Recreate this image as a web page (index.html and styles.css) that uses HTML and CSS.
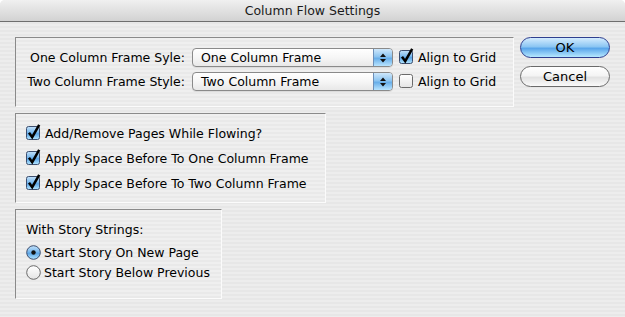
FILE: index.html
```html
<!DOCTYPE html>
<html>
<head>
<meta charset="utf-8">
<link rel="stylesheet" href="styles.css">
</head>
<body>
<svg class="defs" width="0" height="0" aria-hidden="true">
  <defs>
    <linearGradient id="blueFill" x1="0" y1="0" x2="0" y2="1">
      <stop offset="0" stop-color="#c4e2fa"/>
      <stop offset="0.45" stop-color="#7ab9ee"/>
      <stop offset="0.55" stop-color="#5aa4e6"/>
      <stop offset="1" stop-color="#b4e6ff"/>
    </linearGradient>
    <linearGradient id="whiteFill" x1="0" y1="0" x2="0" y2="1">
      <stop offset="0" stop-color="#ffffff"/>
      <stop offset="0.5" stop-color="#f2f2f2"/>
      <stop offset="1" stop-color="#e4e4e4"/>
    </linearGradient>
  </defs>
</svg>
<div class="window">
  <div class="titlebar">Column Flow Settings</div>
  <div class="content">
    <div class="top-row">
      <div class="group g1">
        <div class="frame-row">
          <span class="lbl">One Column Frame Syle:</span>
          <div class="popup"><span class="popup-text">One Column Frame</span><span class="arrows"><svg width="8" height="12" viewBox="0 0 8 12"><path d="M1 5 L4 1.5 L7 5 Z M1 7 L4 10.5 L7 7 Z" fill="#111"/></svg></span></div>
          <span class="check">
            <svg class="cb" width="16" height="17" viewBox="0 0 16 17"><rect x="0.5" y="2.5" width="13" height="13" rx="2" fill="url(#blueFill)" stroke="#3d4e6e"/><path d="M3 8.8 L6.2 13.2 L13.2 0.8" fill="none" stroke="#000" stroke-width="2.5"/></svg>
            Align to Grid
          </span>
        </div>
        <div class="frame-row">
          <span class="lbl">Two Column Frame Style:</span>
          <div class="popup"><span class="popup-text">Two Column Frame</span><span class="arrows"><svg width="8" height="12" viewBox="0 0 8 12"><path d="M1 5 L4 1.5 L7 5 Z M1 7 L4 10.5 L7 7 Z" fill="#111"/></svg></span></div>
          <span class="check">
            <svg class="cb" width="16" height="17" viewBox="0 0 16 17"><rect x="0.5" y="2.5" width="13" height="13" rx="2" fill="url(#whiteFill)" stroke="#6a6a6a"/></svg>
            Align to Grid
          </span>
        </div>
      </div>
      <div class="buttons">
        <div class="btn btn-default">OK</div>
        <div class="btn">Cancel</div>
      </div>
    </div>

    <div class="group g2">
      <div class="opt">
        <svg class="cb" width="16" height="17" viewBox="0 0 16 17"><rect x="0.5" y="2.5" width="13" height="13" rx="2" fill="url(#blueFill)" stroke="#3d4e6e"/><path d="M3 8.8 L6.2 13.2 L13.2 0.8" fill="none" stroke="#000" stroke-width="2.5"/></svg>
        Add/Remove Pages While Flowing?
      </div>
      <div class="opt">
        <svg class="cb" width="16" height="17" viewBox="0 0 16 17"><rect x="0.5" y="2.5" width="13" height="13" rx="2" fill="url(#blueFill)" stroke="#3d4e6e"/><path d="M3 8.8 L6.2 13.2 L13.2 0.8" fill="none" stroke="#000" stroke-width="2.5"/></svg>
        Apply Space Before To One Column Frame
      </div>
      <div class="opt">
        <svg class="cb" width="16" height="17" viewBox="0 0 16 17"><rect x="0.5" y="2.5" width="13" height="13" rx="2" fill="url(#blueFill)" stroke="#3d4e6e"/><path d="M3 8.8 L6.2 13.2 L13.2 0.8" fill="none" stroke="#000" stroke-width="2.5"/></svg>
        Apply Space Before To Two Column Frame
      </div>
    </div>

    <div class="group g3">
      <div class="g3-title">With Story Strings:</div>
      <div class="radio-opt">
        <svg class="rb" width="15" height="15" viewBox="0 0 15 15"><circle cx="7.5" cy="7.5" r="6.8" fill="url(#blueFill)" stroke="#3d4e6e"/><circle cx="7.5" cy="7.5" r="2.2" fill="#111"/></svg>
        Start Story On New Page
      </div>
      <div class="radio-opt">
        <svg class="rb" width="15" height="15" viewBox="0 0 15 15"><circle cx="7.5" cy="7.5" r="6.8" fill="url(#whiteFill)" stroke="#6a6a6a"/></svg>
        Start Story Below Previous
      </div>
    </div>
  </div>
</div>
</body>
</html>
```

FILE: styles.css
```css
html, body {
  margin: 0;
  padding: 0;
  background: #ffffff;
}

.defs {
  display: block;
  width: 0;
  height: 0;
}

.window {
  width: 625px;
  height: 317px;
  border-radius: 5px 5px 0 0;
  overflow: hidden;
  font-family: "DejaVu Sans", "Liberation Sans", sans-serif;
  font-size: 12.5px;
  color: #000;
  background: repeating-linear-gradient(to bottom, #ededed 0, #ededed 2px, #e7e7e7 2px, #e7e7e7 4px);
}

.titlebar {
  height: 21px;
  border-bottom: 1px solid #6e6e6e;
  background: linear-gradient(to bottom, #f0f0f0, #d2d2d2);
  text-align: center;
  line-height: 22px;
  font-size: 12.5px;
  color: #1a1a1a;
}

.content {
  padding: 15px 0 0 15px;
  display: flex;
  flex-direction: column;
  align-items: flex-start;
  gap: 6px;
}

.top-row {
  display: flex;
  gap: 6px;
  align-items: flex-start;
}

.group {
  box-sizing: border-box;
  border-top: 1px solid #8a8a8a;
  border-left: 1px solid #8a8a8a;
  border-right: 1px solid #fbfbfb;
  border-bottom: 1px solid #fbfbfb;
  background: repeating-linear-gradient(to bottom, #efefef 0, #efefef 2px, #e9e9e9 2px, #e9e9e9 4px);
}

.g1 {
  width: 499px;
  height: 70px;
  padding: 10px 0 0 9px;
  display: flex;
  flex-direction: column;
  gap: 5px;
}

.frame-row {
  display: flex;
  align-items: center;
  height: 19px;
}

.lbl {
  width: 160px;
  text-align: right;
  margin-right: 7px;
  white-space: nowrap;
}

.popup {
  box-sizing: border-box;
  width: 201px;
  height: 19px;
  border: 1px solid #8a8a8a;
  border-radius: 4px;
  background: linear-gradient(to bottom, #ffffff 0%, #f6f6f6 50%, #e8e8e8 100%);
  display: flex;
  align-items: center;
  overflow: hidden;
  box-shadow: 0 1px 0 rgba(0,0,0,0.08);
}

.popup-text {
  flex: 1;
  padding-left: 8px;
  line-height: 17px;
}

.arrows {
  width: 18px;
  height: 17px;
  display: flex;
  align-items: center;
  justify-content: center;
  border-left: 1px solid #6d8fb8;
  background: linear-gradient(to bottom, #cfe8fc 0%, #8cc4f0 45%, #68aee9 55%, #b8e4ff 100%);
}

.check {
  display: flex;
  align-items: center;
  margin-left: 6px;
  gap: 3px;
  white-space: nowrap;
}

.cb {
  display: block;
  margin-top: -3px;
}

.buttons {
  display: flex;
  flex-direction: column;
  gap: 8px;
}

.btn {
  box-sizing: border-box;
  width: 90px;
  height: 21px;
  border-radius: 11px;
  border: 1px solid #6b6b6b;
  background: linear-gradient(to bottom, #ffffff 0%, #f4f4f4 45%, #e2e2e2 55%, #fafafa 100%);
  text-align: center;
  line-height: 19px;
  font-size: 13px;
}

.btn-default {
  border-color: #2f3f8f;
  background: linear-gradient(to bottom, #d4ecfe 0%, #8cc6f3 45%, #5aa6ea 55%, #b6e8ff 100%);
}

.g2 {
  width: 311px;
  height: 90px;
  padding: 11px 0 0 10px;
  display: flex;
  flex-direction: column;
  gap: 8px;
}

.opt {
  display: flex;
  align-items: center;
  gap: 3px;
  height: 17px;
  white-space: nowrap;
}

.g3 {
  width: 207px;
  height: 90px;
  padding: 12px 0 0 10px;
  display: flex;
  flex-direction: column;
  gap: 5px;
}

.g3-title {
  height: 15px;
  line-height: 15px;
  margin-bottom: 3px;
}

.radio-opt {
  display: flex;
  align-items: center;
  gap: 3px;
  height: 15px;
  white-space: nowrap;
}

.rb {
  display: block;
}
```
